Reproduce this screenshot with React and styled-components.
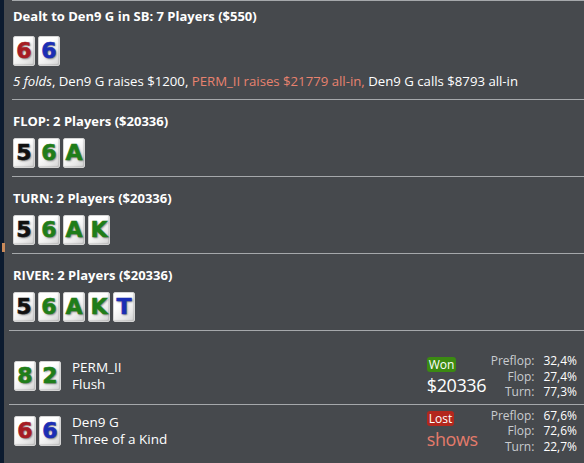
import React from "react";
import styled, { createGlobalStyle } from "styled-components";

const GlobalStyle = createGlobalStyle`
  html, body {
    margin: 0;
    padding: 0;
    background: #46494d;
  }
  body {
    font-family: "Open Sans", "Noto Sans", sans-serif;
    color: #ffffff;
  }
`;

const suitColors = {
  h: "#a51c24",
  d: "#1b2eb5",
  c: "#1f7d19",
  s: "#111111",
};

const Page = styled.div`
  display: flex;
  width: 584px;
  height: 463px;
  overflow: hidden;
  background: #46494d;
`;

const Strip = styled.div`
  width: 4px;
  flex: none;
  background: #0c1b2f;
  display: flex;
  flex-direction: column;
`;

const Marker = styled.div`
  margin-top: 243px;
  margin-left: 2px;
  width: 3px;
  height: 9px;
  background: #c98a5a;
`;

const Panel = styled.div`
  flex: 1;
  padding-left: 8px;
  display: flex;
  flex-direction: column;
`;

const Section = styled.div`
  border-top: 1px solid #a5a8ab;
  padding: ${(p) => (p.$first ? "7px 0 10px 1px" : "13px 0 8px 1px")};
  display: flex;
  flex-direction: column;
  gap: ${(p) => (p.$first ? "12px" : "9px")};
`;

const Heading = styled.div`
  font-size: 13px;
  font-weight: 700;
  line-height: 16px;
`;

const CardRow = styled.div`
  display: flex;
  gap: 3px;
`;

const Card = styled.span`
  width: 22px;
  height: 30px;
  box-sizing: border-box;
  border: 1px solid #d4d4d4;
  border-radius: 2px;
  background: linear-gradient(135deg, #ffffff 35%, #e8e8e8 75%, #d2d2d2);
  box-shadow: inset -1px -1px 1px rgba(0, 0, 0, 0.12);
  display: flex;
  align-items: center;
  justify-content: center;
  font-family: "DejaVu Sans", "Liberation Sans", sans-serif;
  font-weight: 700;
  font-size: 22px;
  line-height: 1;
  color: ${(p) => suitColors[p.$suit]};
  -webkit-text-stroke: 0.6px ${(p) => suitColors[p.$suit]};
  text-shadow: 1px 1px 2px rgba(0, 0, 0, 0.5);
`;

const Actions = styled.div`
  font-size: 13.2px;
  line-height: 16px;
  margin-top: -5px;
`;

const Folds = styled.em`
  font-style: italic;
`;

const Raise = styled.span`
  color: #e8826f;
`;

const Showdown = styled.div`
  border-top: 1px solid #a5a8ab;
  padding-top: 19px;
  margin-left: -3px;
  display: flex;
  flex-direction: column;
`;

const PlayerRow = styled.div`
  display: grid;
  grid-template-columns: auto 1fr 53px auto;
  column-gap: 11px;
  align-items: center;
  padding: 3px 7px 4px 5px;
  border-top: ${(p) => (p.$divided ? "1px solid #a5a8ab" : "none")};
`;

const Hand = styled.div`
  font-size: 13.5px;
  line-height: 17px;
`;

const Result = styled.div`
  display: flex;
  flex-direction: column;
  align-items: flex-start;
  gap: 2px;
`;

const Badge = styled.span`
  font-size: 12px;
  line-height: 15px;
  padding: 0 2px;
  border-radius: 3px;
  background: ${(p) => (p.$won ? "#3b8a12" : "#b3271d")};
  color: #ffffff;
`;

const Amount = styled.span`
  font-size: 18px;
  line-height: 22px;
  letter-spacing: -0.4px;
  white-space: nowrap;
  color: ${(p) => (p.$lost ? "#e47b6b" : "#ffffff")};
`;

const Stats = styled.div`
  display: grid;
  grid-template-columns: auto auto;
  column-gap: 9px;
  font-size: 12px;
  line-height: 15.5px;
`;

const StatLabel = styled.span`
  text-align: right;
  color: #c9ccd0;
`;

const StatValue = styled.span`
  color: #ffffff;
`;

const Cards = ({ cards }) => (
  <CardRow>
    {cards.map(([rank, suit], i) => (
      <Card key={i} $suit={suit}>
        {rank}
      </Card>
    ))}
  </CardRow>
);

const streets = [
  { name: "FLOP", cards: ["5s", "6c", "Ac"] },
  { name: "TURN", cards: ["5s", "6c", "Ac", "Kc"] },
  { name: "RIVER", cards: ["5s", "6c", "Ac", "Kc", "Td"] },
];

const players = [
  {
    name: "PERM_II",
    hand: "Flush",
    cards: ["8c", "2c"],
    won: true,
    amount: "$20336",
    stats: ["32,4%", "27,4%", "77,3%"],
  },
  {
    name: "Den9 G",
    hand: "Three of a Kind",
    cards: ["6h", "6d"],
    won: false,
    amount: "shows",
    stats: ["67,6%", "72,6%", "22,7%"],
  },
];

const statNames = ["Preflop:", "Flop:", "Turn:"];

export default function App() {
  return (
    <>
      <GlobalStyle />
      <Page>
        <Strip>
          <Marker />
        </Strip>
        <Panel>
          <Section $first>
            <Heading>Dealt to Den9 G in SB: 7 Players ($550)</Heading>
            <Cards cards={["6h", "6d"]} />
            <Actions>
              <Folds>5 folds</Folds>, Den9 G raises $1200,{" "}
              <Raise>PERM_II raises $21779 all-in,</Raise> Den9 G calls $8793 all-in
            </Actions>
          </Section>
          {streets.map((s) => (
            <Section key={s.name}>
              <Heading>{s.name}: 2 Players ($20336)</Heading>
              <Cards cards={s.cards} />
            </Section>
          ))}
          <Showdown>
            {players.map((p, i) => (
              <PlayerRow key={p.name} $divided={i > 0}>
                <Cards cards={p.cards} />
                <Hand>
                  <div>{p.name}</div>
                  <div>{p.hand}</div>
                </Hand>
                <Result>
                  <Badge $won={p.won}>{p.won ? "Won" : "Lost"}</Badge>
                  <Amount $lost={!p.won}>{p.amount}</Amount>
                </Result>
                <Stats>
                  {statNames.map((n, j) => (
                    <React.Fragment key={n}>
                      <StatLabel>{n}</StatLabel>
                      <StatValue>{p.stats[j]}</StatValue>
                    </React.Fragment>
                  ))}
                </Stats>
              </PlayerRow>
            ))}
          </Showdown>
        </Panel>
      </Page>
    </>
  );
}
